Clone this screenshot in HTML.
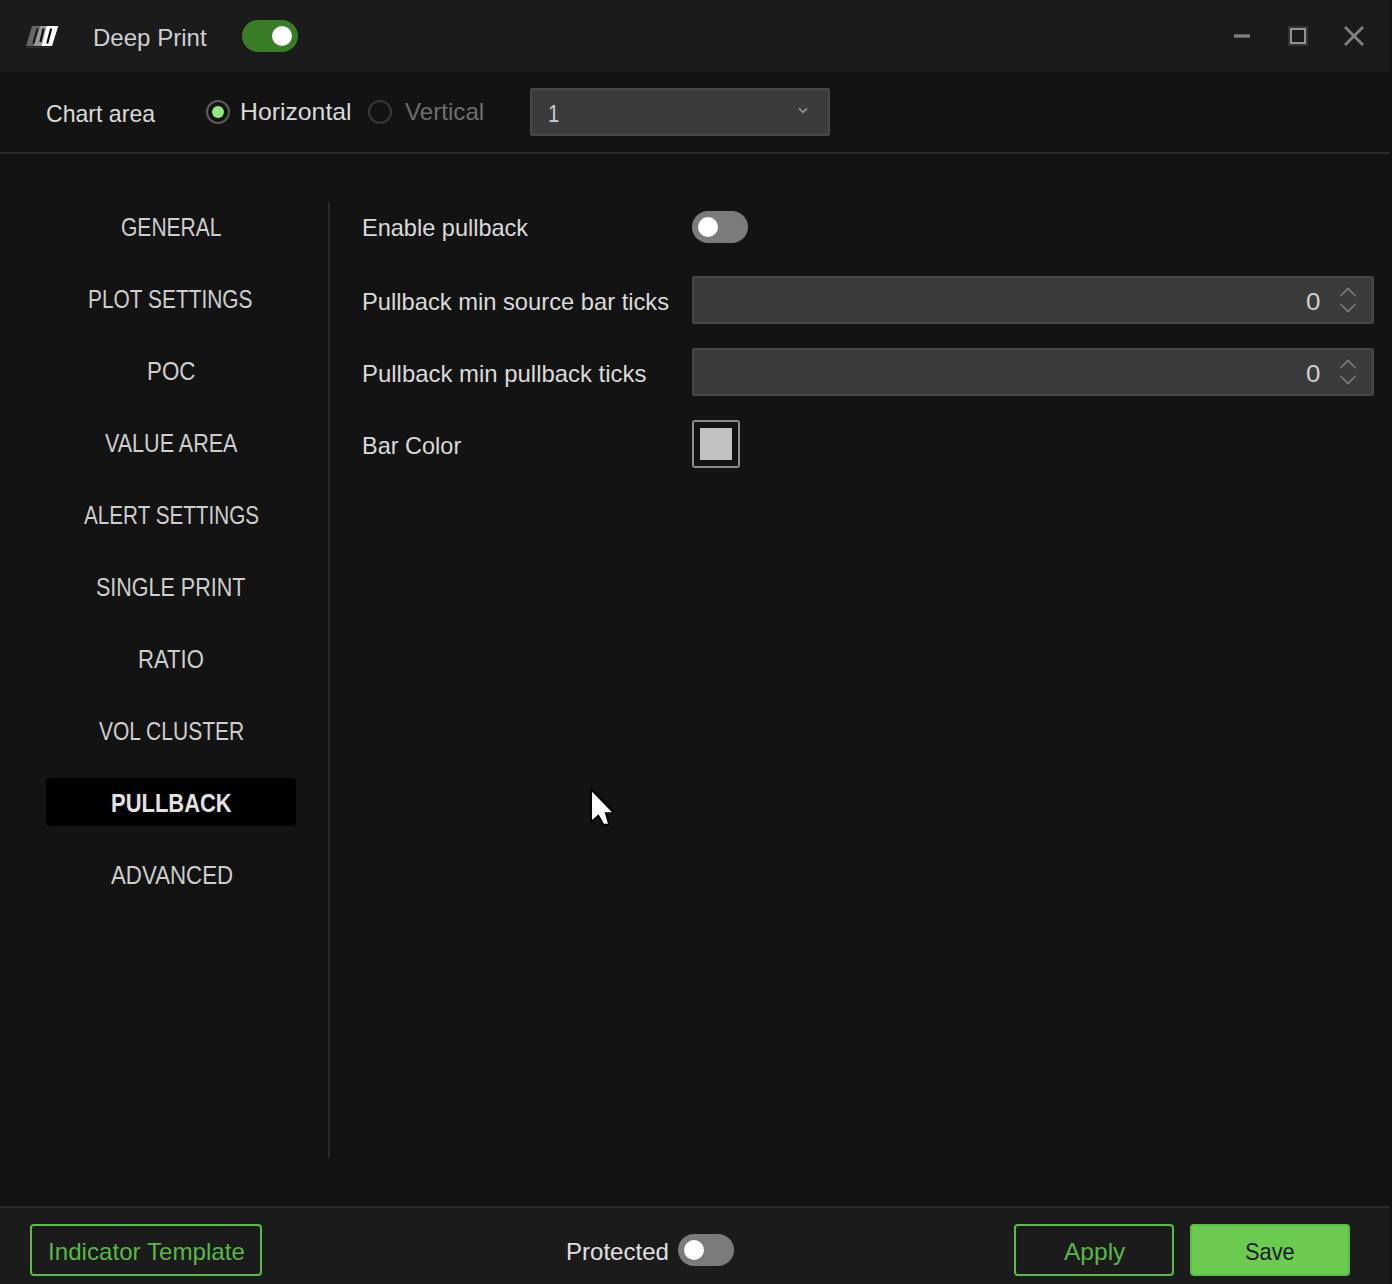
<!DOCTYPE html>
<html lang="en">
<head>
<meta charset="utf-8">
<title>Deep Print</title>
<style>
html,body{margin:0;padding:0}
body{width:1392px;height:1284px;background:#131313;position:relative;overflow:hidden;font-family:"Liberation Sans",sans-serif}
header,section,nav,main,footer,ul,li,label{display:block;margin:0;padding:0;list-style:none}
.abs{position:absolute}
.t{position:absolute;display:block;margin:0;padding:0;text-decoration:none;line-height:1;white-space:nowrap;transform-origin:0 0;font-family:"Liberation Sans",sans-serif;font-weight:400}
.titlebar{left:0;top:0;width:1390px;height:72px;background:#1b1b1b}
.hr{left:0;top:152px;width:1390px;height:2px;background:#2b2b2b}
.vr{left:328px;top:202px;width:2px;height:956px;background:#2b2b2b}
.footbar{left:0;top:1206px;width:1390px;height:78px;background:#1b1b1b;border-top:2px solid #2b2b2b;box-sizing:border-box}
.tog{position:absolute;width:56px;height:32px;border-radius:16px;background:#7b7b7b}
.tog i{position:absolute;top:6px;left:6px;width:20px;height:20px;border-radius:50%;background:#fff}
.tog.on{background:#397d27}
.tog.on i{left:30px}
.radio{position:absolute;width:24px;height:24px;border-radius:50%;box-sizing:border-box;border:2px solid #5c5c5c}
.radio.sel::after{content:"";position:absolute;left:4px;top:4px;width:12px;height:12px;border-radius:50%;background:#8fe87d}
.radio.dis{border-color:#383838}
.field{position:absolute;box-sizing:border-box;background:#3b3b3b;border:2px solid #484848;border-radius:2.5px}
.sel-item{left:46px;top:778px;width:250px;height:48px;background:#000;border-radius:4px}
.btn{position:absolute;box-sizing:border-box;height:52px;top:1224px;border:2px solid #5dbc47;border-radius:4px}
.btn.fill{background:#6bca50}
.swatch{left:692px;top:420px;width:48px;height:48px;box-sizing:border-box;border:2px solid #8a8a8a;border-radius:3px}
.swatch i{position:absolute;left:6px;top:6px;width:32px;height:32px;background:#c2c2c2}
svg{position:absolute;overflow:visible}
</style>
</head>
<body>
<header>
<div class="abs titlebar"></div>
<svg style="left:0;top:0" width="80" height="72" viewBox="0 0 80 72">
<polygon points="32,26 40,26 33.8,46 26,46" fill="#666"/>
<polygon points="40,26 46.5,26 41.5,46 33.8,46" fill="#9a9a9a"/>
<polygon points="46.5,26 58.3,26 52,46 41.5,46" fill="#fff"/>
<line x1="37.6" y1="28.5" x2="33.2" y2="43.5" stroke="#161616" stroke-width="2"/>
<line x1="43.6" y1="28.5" x2="40.4" y2="42" stroke="#0c0c0c" stroke-width="2.2"/>
<line x1="51.2" y1="28.5" x2="47.2" y2="43.5" stroke="#0c0c0c" stroke-width="2.2"/>
<rect x="26" y="47" width="24" height="1" fill="#303030"/>
</svg>
<h1 class="t" style="left:93.00px;top:26px;font-size:24px;color:#cfcfcf;transform:scaleX(1.0018)">Deep Print</h1>
<div class="tog on" style="left:242px;top:20px"><i></i></div>
<svg style="left:1220px;top:0" width="170" height="72" viewBox="1220 0 170 72">
<rect x="1234" y="34" width="16" height="4" fill="#5c5c5c"/>
<rect x="1234" y="35" width="16" height="2" fill="#7e7e7e"/>
<rect x="1289" y="27" width="18" height="18" fill="none" stroke="#333" stroke-width="2"/>
<rect x="1291" y="29" width="14" height="14" fill="none" stroke="#929292" stroke-width="2"/>
<path d="M1345 27 L1363 45 M1363 27 L1345 45" stroke="#828282" stroke-width="2.8" fill="none"/>
</svg>
</header>
<section class="toolbar">
<label class="t" style="left:45.54px;top:102px;font-size:24px;color:#dadada;transform:scaleX(0.9619)">Chart area</label>
<div class="radio sel" style="left:206px;top:100px"></div>
<label class="t" style="left:239.94px;top:100px;font-size:24px;color:#dadada;transform:scaleX(1.0324)">Horizontal</label>
<div class="radio dis" style="left:368px;top:100px"></div>
<label class="t" style="left:404.50px;top:100px;font-size:24px;color:#6e6e6e;transform:scaleX(1.0065)">Vertical</label>
<div class="field" style="left:530px;top:88px;width:300px;height:48px"></div>
<span class="t" style="left:547.80px;top:102px;font-size:24px;color:#cfcfcf;transform:scaleX(0.8500)">1</span>
<svg style="left:790px;top:100px" width="30" height="24" viewBox="790 100 30 24">
<path d="M799 108.3 L803 112.3 L807 108.3" stroke="#959595" stroke-width="1.7" fill="none"/>
</svg>
<div class="abs hr"></div>
</section>
<nav>
<div class="abs sel-item"></div>
<ul>
<li><a class="t" style="left:121.16px;top:215px;font-size:25px;color:#cecece;transform:scaleX(0.8415)">GENERAL</a></li>
<li><a class="t" style="left:88.33px;top:287px;font-size:25px;color:#cecece;transform:scaleX(0.8361)">PLOT SETTINGS</a></li>
<li><a class="t" style="left:146.61px;top:359px;font-size:25px;color:#cecece;transform:scaleX(0.8941)">POC</a></li>
<li><a class="t" style="left:105.00px;top:431px;font-size:25px;color:#cecece;transform:scaleX(0.8610)">VALUE AREA</a></li>
<li><a class="t" style="left:83.70px;top:503px;font-size:25px;color:#cecece;transform:scaleX(0.8270)">ALERT SETTINGS</a></li>
<li><a class="t" style="left:96.44px;top:575px;font-size:25px;color:#cecece;transform:scaleX(0.8599)">SINGLE PRINT</a></li>
<li><a class="t" style="left:137.73px;top:647px;font-size:25px;color:#cecece;transform:scaleX(0.8847)">RATIO</a></li>
<li><a class="t" style="left:98.80px;top:719px;font-size:25px;color:#cecece;transform:scaleX(0.8407)">VOL CLUSTER</a></li>
<li><a class="t active" style="left:111.02px;top:791px;font-size:25px;color:#e2e2e2;transform:scaleX(0.8779);font-weight:700">PULLBACK</a></li>
<li><a class="t" style="left:110.60px;top:863px;font-size:25px;color:#cecece;transform:scaleX(0.8912)">ADVANCED</a></li>
</ul>
<div class="abs vr"></div>
</nav>
<main>
<div class="row">
<label class="t" style="left:361.74px;top:216px;font-size:24px;color:#dadada;transform:scaleX(0.9804)">Enable pullback</label>
<div class="tog" style="left:692px;top:211px"><i></i></div>
</div>
<div class="row">
<label class="t" style="left:361.72px;top:290px;font-size:24px;color:#dadada;transform:scaleX(0.9880)">Pullback min source bar ticks</label>
<div class="field" style="left:692px;top:276px;width:682px;height:48px"></div>
<span class="t" style="left:1305.92px;top:290px;font-size:24px;color:#d0d0d0;transform:scaleX(1.0833)">0</span>
</div>
<div class="row">
<label class="t" style="left:361.71px;top:362px;font-size:24px;color:#dadada;transform:scaleX(0.9965)">Pullback min pullback ticks</label>
<div class="field" style="left:692px;top:348px;width:682px;height:48px"></div>
<span class="t" style="left:1305.92px;top:362px;font-size:24px;color:#d0d0d0;transform:scaleX(1.0833)">0</span>
</div>
<svg style="left:1334px;top:276px" width="30" height="48" viewBox="1334 0 30 48">
<path d="M1340.5 20 L1348 12.5 L1355.5 20" stroke="#7c7c7c" stroke-width="1.7" fill="none"/>
<path d="M1340.5 28 L1348 35.5 L1355.5 28" stroke="#7c7c7c" stroke-width="1.7" fill="none"/>
</svg>
<svg style="left:1334px;top:348px" width="30" height="48" viewBox="1334 0 30 48">
<path d="M1340.5 20 L1348 12.5 L1355.5 20" stroke="#7c7c7c" stroke-width="1.7" fill="none"/>
<path d="M1340.5 28 L1348 35.5 L1355.5 28" stroke="#7c7c7c" stroke-width="1.7" fill="none"/>
</svg>
<div class="row">
<label class="t" style="left:361.74px;top:434px;font-size:24px;color:#dadada;transform:scaleX(0.9788)">Bar Color</label>
<div class="abs swatch"><i></i></div>
</div>
</main>
<footer>
<div class="abs footbar"></div>
<div class="btn" style="left:30px;width:232px"></div>
<span class="t" style="left:47.69px;top:1240px;font-size:24px;color:#5ab745;transform:scaleX(1.0062)">Indicator Template</span>
<label class="t" style="left:566.00px;top:1240px;font-size:24px;color:#e0e0e0;transform:scaleX(1.0020)">Protected</label>
<div class="tog" style="left:678px;top:1234px"><i></i></div>
<div class="btn" style="left:1014px;width:160px"></div>
<span class="t" style="left:1063.60px;top:1240px;font-size:24px;color:#5ab745;transform:scaleX(1.0217)">Apply</span>
<div class="btn fill" style="left:1190px;width:160px"></div>
<span class="t" style="left:1244.69px;top:1240px;font-size:24px;color:#1b1b1b;transform:scaleX(0.9094)">Save</span>
</footer>
<svg style="left:580px;top:780px" width="50" height="60" viewBox="580 780 50 60">
<polygon points="590,788 592,788 614,810 614,814.3 607.4,814.3 610,825.4 602.6,825.4 598.2,817.4 592.6,822.4 590,822.4" fill="#05050a"/>
<polygon points="592,791.8 592,820 598.6,814.2 604,823.7 608,823.7 604.6,812.3 612,812.3" fill="#fff"/>
</svg>
</body>
</html>
